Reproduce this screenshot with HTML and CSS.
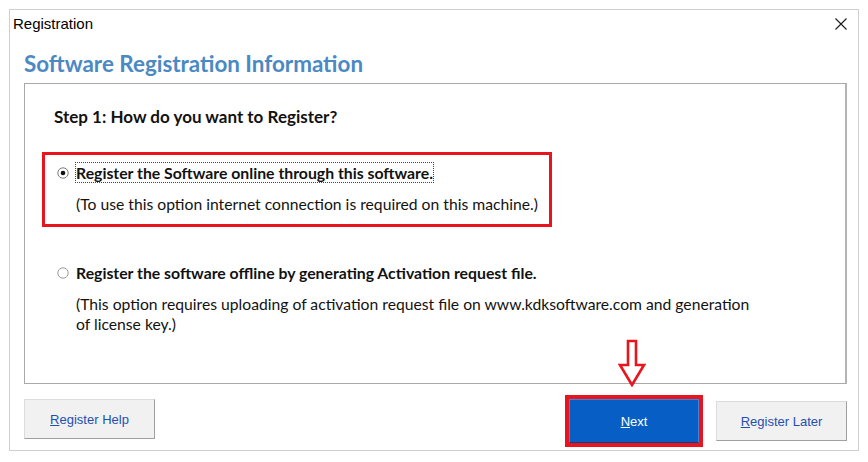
FILE: index.html
```html
<!DOCTYPE html>
<html>
<head>
<meta charset="utf-8">
<link rel="stylesheet" href="styles.css">
</head>
<body>
<div class="window">
  <div class="titlebar">
    <span class="title">Registration</span>
    <svg class="close" width="12" height="12" viewBox="0 0 12 12"><path d="M0.5 0.5 L11.5 11.5 M11.5 0.5 L0.5 11.5" stroke="#1a1a1a" stroke-width="1.1" fill="none"/></svg>
  </div>
  <h1 class="heading">Software Registration Information</h1>
  <div class="panel">
    <div class="step">Step 1: How do you want to Register?</div>
    <div class="option marked">
      <svg class="radio" width="12" height="12" viewBox="0 0 12 12"><circle cx="6" cy="6" r="5.2" fill="#fff" stroke="#7a7a7a" stroke-width="1"/><circle cx="6" cy="6" r="2.3" fill="#111"/></svg>
      <div class="label"><span class="focus">Register the Software online through this software.</span></div>
      <div class="desc">(To use this option internet connection is required on this machine.)</div>
    </div>
    <div class="option">
      <svg class="radio" width="12" height="12" viewBox="0 0 12 12"><circle cx="6" cy="6" r="5.2" fill="#fff" stroke="#9a9a9a" stroke-width="1"/></svg>
      <div class="label">Register the software offline by generating Activation request file.</div>
      <div class="desc">(This option requires uploading of activation request file on www.kdksoftware.com and generation<br>of license key.)</div>
    </div>
  </div>
  <div class="buttons">
    <button class="btn help"><u>R</u>egister Help</button>
    <div class="next-mark"><button class="btn next"><u>N</u>ext</button></div>
    <button class="btn later"><u>R</u>egister Later</button>
  </div>
  <svg class="arrow" width="28" height="48" viewBox="0 0 28 48"><polygon points="10,2 18,2 18,26 26,26 14,46 2,26 10,26" fill="#fff" stroke="#e8141e" stroke-width="2.6" stroke-linejoin="miter"/></svg>
</div>
</body>
</html>
```
FILE: styles.css
```css
html, body {
  margin: 0;
  padding: 0;
  background: #ffffff;
}
.window {
  position: relative;
  margin: 9px 0 0 9px;
  width: 848px;
  height: 440px;
  border: 1px solid #cfcfcf;
  background: #ffffff;
  display: flex;
  flex-direction: column;
}
.titlebar {
  height: 26px;
  display: flex;
  align-items: center;
  justify-content: space-between;
  padding: 0 11px 0 3px;
}
.title {
  font-family: "Liberation Sans", Arial, sans-serif;
  font-size: 15px;
  color: #000;
}
.close {
  display: block;
  margin-top: 2px;
}
.heading {
  margin: 15px 0 7px 14px;
  font-family: Lato, "Liberation Sans", sans-serif;
  font-weight: bold;
  font-size: 22.4px;
  line-height: 25px;
  color: #4a89c4;
}
.panel {
  margin-left: 14px;
  width: 820px;
  height: 299px;
  border: 1px solid #a9a9a9;
  border-right: 2px solid #b4b4b4;
  box-sizing: content-box;
  display: flex;
  flex-direction: column;
  font-family: Lato, "Liberation Sans", sans-serif;
  color: #121212;
}
.step {
  margin: 22px 0 0 29px;
  font-weight: bold;
  font-size: 17px;
  line-height: 22px;
}
.option {
  margin: 25px 0 0 17px;
  width: 492px;
  border: 3px solid transparent;
  padding: 8px 0 10px 12px;
  display: grid;
  grid-template-columns: 12px auto;
  column-gap: 7px;
  row-gap: 11px;
  align-items: center;
}
.option.marked {
  margin-top: 24px;
  border-color: #e8141e;
}
.option:not(.marked) {
  width: 740px;
}
.radio {
  display: block;
}
.label {
  font-weight: bold;
  font-size: 15.8px;
  line-height: 20px;
  white-space: nowrap;
}
.focus {
  outline: 1px dotted #444;
  outline-offset: 0px;
}
.desc {
  grid-column: 2;
  font-size: 15.7px;
  line-height: 20px;
  white-space: nowrap;
}
.buttons {
  margin: 11px 0 0 14px;
  display: flex;
  align-items: flex-start;
}
.btn {
  font-family: "Liberation Sans", Arial, sans-serif;
  font-size: 13px;
  color: #1f4fb0;
  background: #f1f1f1;
  border: 1px solid #dcdcdc;
  border-right-color: #a0a0a0;
  border-bottom-color: #a0a0a0;
  padding: 0;
  cursor: default;
}
.btn u {
  text-decoration: underline;
}
.help {
  width: 131px;
  height: 40px;
  margin-top: 4px;
}
.next-mark {
  margin-left: 410px;
  border: 4px solid #e8141e;
  display: flex;
}
.next {
  width: 130px;
  height: 44px;
  background: #075fc6;
  color: #ffffff;
  border: 1px solid #3a86dc;
  border-bottom-color: #0b3f8a;
}
.later {
  width: 131px;
  height: 40px;
  margin-left: 13px;
  margin-top: 6px;
}
.arrow {
  position: absolute;
  left: 608px;
  top: 329px;
}
```
